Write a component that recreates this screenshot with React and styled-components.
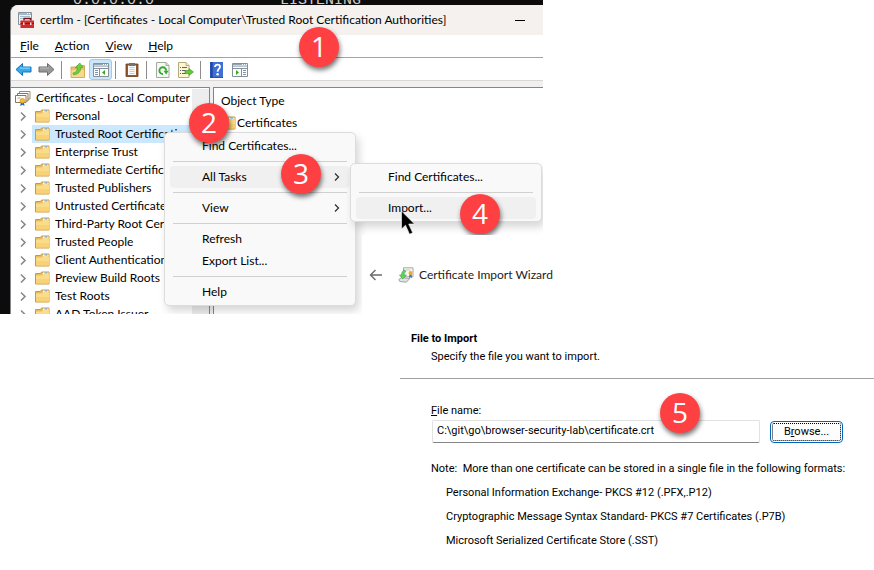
import React from "react";
import styled, { createGlobalStyle } from "styled-components";

const ui = 'Lato, "Open Sans", sans-serif';
const dialogFont = 'Roboto, "Noto Sans", sans-serif';

const Global = createGlobalStyle`
  * { box-sizing: border-box; }
  body { margin: 0; background: #fff; color: #000; font: 12px/18px ${ui}; }
  button, input { font: inherit; color: inherit; }
  ul { list-style: none; margin: 0; padding: 0; }
  h1, h2, p { margin: 0; font-size: inherit; }
  svg { display: block; flex: none; }
`;

const Page = styled.main`
  display: grid;
  grid-template-columns: 362px 181px 1fr;
  grid-template-rows: 235px 79px auto;
  min-height: 100vh;
  overflow: hidden;
`;

const Capture = styled.section`
  grid-area: 1 / 1 / 3 / 3;
  position: relative;
  overflow: hidden;
  background: #0c0c0c;
  padding-left: 10px;
  display: flex;
  flex-direction: column;
`;

const Terminal = styled.div`
  display: flex;
  align-items: flex-end;
  gap: 126px;
  height: 5px;
  padding-left: 63px;
  color: #ccc;
  font: 15px/9px "Liberation Mono", monospace;
  white-space: nowrap;
`;

const ConsoleWindow = styled.div`
  flex: 1;
  min-height: 0;
  display: flex;
  flex-direction: column;
  background: #f0f0f0;
  border-left: 1px solid #85878c;
  border-top-left-radius: 8px;
  overflow: hidden;
`;

const TitleBar = styled.header`
  display: flex;
  align-items: center;
  gap: 6px;
  height: 30px;
  padding: 0 18px 0 7px;
  background: #f4f1ef;
  white-space: nowrap;
`;

const WindowTitle = styled.h1`
  flex: 1;
  font-weight: 400;
`;

const PlainButton = styled.button`
  display: flex;
  align-items: center;
  justify-content: center;
  padding: 0;
  border: 0;
  background: none;
`;

const MenuBar = styled.nav`
  display: flex;
  gap: 16px;
  height: 23px;
  padding-left: 9px;
  background: #fff;
  border-bottom: 1px solid #a3a3a3;
`;

const ToolBar = styled.div`
  display: flex;
  align-items: center;
  height: 23px;
  padding: 1px 0 0 1px;
  background: #fff;
  border-bottom: 1px solid #d9d6d3;
`;

const ToolButton = styled(PlainButton)`
  width: 23px;
  height: 21px;
  border: 1px solid ${(p) => (p.$on ? "#99ccf5" : "transparent")};
  border-radius: 3px;
  background: ${(p) => (p.$on ? "#cce6fb" : "none")};
`;

const ToolRule = styled.span`
  width: 1px;
  height: 18px;
  margin: 0 4px 0 3px;
  background: #8d8d8d;
`;

const Panes = styled.div`
  flex: 1;
  min-height: 0;
  display: grid;
  grid-template-columns: 199px 1fr;
  gap: 3px;
  padding-top: 6px;
`;

const Pane = styled.div`
  background: #fff;
  border: 1px solid #82858f;
  border-bottom: 0;
  overflow: hidden;
`;

const TreePane = styled(Pane)`
  display: grid;
  grid-template-columns: 1fr 17px;
  border-left: 0;
  padding-top: 1px;
`;

const Tree = styled.ul`
  min-width: 0;
  overflow: hidden;
  white-space: nowrap;
`;

const ScrollTrack = styled.div`
  background: #ededed;
`;

const RootRow = styled.li`
  display: flex;
  align-items: center;
  gap: 5px;
  height: 18px;
  padding-left: 4px;
`;

const TreeRow = styled.li`
  display: flex;
  align-items: center;
  height: 18px;
  padding-left: 8px;
`;

const TreeLabel = styled.span`
  flex: 1;
  display: flex;
  align-items: center;
  gap: 5px;
  margin-left: 5px;
  padding-left: 3px;
  background: ${(p) => (p.$selected ? "#cce8ff" : "none")};
`;

const ListPane = styled(Pane)`
  border-right: 0;
  padding: 2px 0 0 7px;
`;

const ListHead = styled.div`
  height: 22px;
  line-height: 22px;
`;

const ListRow = styled.div`
  display: flex;
  align-items: center;
  gap: 1px;
  height: 22px;
`;

const Menu = styled.div`
  position: absolute;
  left: ${(p) => p.$x}px;
  top: ${(p) => p.$y}px;
  width: 192px;
  padding: 2px 5px;
  background: #f9f9f9;
  border: 1px solid #dcdcdc;
  border-radius: 5px;
  box-shadow: 3px 5px 9px rgba(0, 0, 0, 0.16);
`;

const MenuItem = styled(PlainButton)`
  width: 100%;
  height: 22px;
  justify-content: space-between;
  padding: 0 9px 0 32px;
  border-radius: 4px;
  background: ${(p) => (p.$hover ? "#f0f0f0" : "none")};
`;

const MenuRule = styled.hr`
  height: 1px;
  margin: 4px 3px;
  border: 0;
  background: #d0d0d0;
`;

const Badge = styled.span`
  position: absolute;
  left: ${(p) => p.$x}px;
  top: ${(p) => p.$y}px;
  width: 40px;
  height: 40px;
  border-radius: 50%;
  background: #ff4043;
  box-shadow: 1px 3px 5px rgba(0, 0, 0, 0.55);
  color: #fff;
  font: 28px/39px "Open Sans", sans-serif;
  text-align: center;
`;

const Pointer = styled.svg`
  position: absolute;
  left: 401px;
  top: 210px;
`;

const Wizard = styled.section`
  grid-area: 2 / 2 / 4 / 4;
  position: relative;
  background: #fff;
  font: 11px/18px ${dialogFont};
`;

const WizardBar = styled.header`
  display: flex;
  align-items: center;
  height: 24px;
  margin-top: 28px;
  padding-left: 7px;
  font-family: ${ui};
  font-size: 12px;
  color: #222;
`;

const WizardName = styled.h1`
  margin-left: 5px;
  font-weight: 400;
`;

const BackButton = styled(PlainButton)`
  margin-right: 15px;
`;

const WizardHead = styled.div`
  margin: 43px 0 0 38px;
  padding: 0 0 12px 11px;
  border-bottom: 1px solid #a0a0a0;

  h2 { font-weight: 700; }
  p { padding-left: 20px; }
`;

const WizardBody = styled.div`
  padding: 23px 31px 16px 69px;
`;

const FileRow = styled.div`
  display: flex;
  align-items: center;
  gap: 10px;
  margin-left: 1px;
`;

const FileInput = styled.input`
  flex: 1;
  min-width: 0;
  height: 23px;
  padding: 0 4px 3px;
  border: 1px solid #e2e2e2;
  border-bottom-color: #868686;
  border-radius: 2px;
  outline: 0;
`;

const Browse = styled.button`
  width: 73px;
  height: 22px;
  padding: 0;
  border: 1px solid #0067c0;
  border-radius: 4px;
  background: #fdfdfd;
  outline: 1px dotted #000;
  outline-offset: -3px;
  line-height: 18px;
`;

const Formats = styled.ul`
  display: grid;
  gap: 6px;
  margin-top: 6px;
  padding-left: 15px;
`;

const Note = styled.p`
  margin: 17px -20px 0 0;
  white-space: pre-wrap;
`;

const Folder = () => (
  <svg width="15" height="14" viewBox="0 0 15 14">
    <path d="M.5 2.500h5l1-1.500h7.500v12H.5z" fill="#e9bd59" stroke="#c69a43" />
    <path d="M8 1.500h5.500v2H8z" fill="#fff" />
    <path d="M9.500 1.500h3v1h-3z" fill="#4a9be0" />
    <path d="M1 4.500h5.500l1-1H14v9H1z" fill="#fbdc8b" />
    <path d="M1 8h13v4.500H1z" fill="#f6cd6c" opacity=".7" />
  </svg>
);

const Chevron = () => (
  <svg width="8" height="10" viewBox="0 0 8 10">
    <path d="M2 1.500l4 4-4 4" fill="none" stroke="#8a8a8a" strokeWidth="1.600" />
  </svg>
);

const MenuArrow = () => (
  <svg width="8" height="10" viewBox="0 0 8 10">
    <path d="M2 1.500l3.500 3.500L2 8.500" fill="none" stroke="#333" strokeWidth="1.300" />
  </svg>
);

const AppIcon = () => (
  <svg width="16" height="16" viewBox="0 0 16 16">
    <path d="M.5.5h13v12H.5z" fill="#eef2f6" stroke="#8395a5" />
    <path d="M1 1h12v2H1z" fill="#a9b9c7" />
    <path d="M9 1.500h1M11 1.500h1" stroke="#fff" />
    <path d="M2 4.500h10M2 6.500h3M2 9.500h1" stroke="#a9b9c7" />
    <path d="M6 8.500V6.500h6.500v2" fill="none" stroke="#65191b" strokeWidth="1.400" />
    <path d="M2.500 8.500H16V16H2.500z" fill="#d02c2c" />
    <path d="M2.500 11.500H16" stroke="#8d1517" />
    <path d="M5 10.500h1.500v2.500H5zM12 10.500h1.500v2.500H12z" fill="#f3dede" />
  </svg>
);

const CertStack = () => (
  <svg width="16" height="16" viewBox="0 0 16 16">
    <path d="M4.500 1.500h10.500v7.500H4.500z" fill="#fff" stroke="#9a8a68" />
    <path d="M2.500 3.500h10.500v7.500H2.500z" fill="#fff" stroke="#8a7650" />
    <path d="M.5 5.500h10.500v7H.5z" fill="#fffdf5" stroke="#8a7650" />
    <path d="M2.500 8h3" stroke="#aaa" />
    <path d="M6 11.500L5.200 16l2.300-1.300L9.500 16 8.800 11.500z" fill="#1769c4" />
    <circle cx="7.400" cy="10.800" r="2.400" fill="#f5bb35" stroke="#cf8d16" strokeWidth=".6" />
  </svg>
);

const BlueArrow = ({ forward }) => (
  <svg width="17" height="15" viewBox="0 0 17 15">
    <path
      d={forward ? "M16 7.500L9.500 1.500v3.500H1v5h8.500v3.500z" : "M1 7.500L7.500 1.500v3.500H16v5H7.500v3.500z"}
      fill={forward ? "#989898" : "#35a9ee"}
      stroke={forward ? "#6d6d6d" : "#1676b4"}
      strokeLinejoin="round"
    />
    <path d={forward ? "M2 6.200h9" : "M5 6.200h10"} stroke={forward ? "#b5b5b5" : "#80d0fa"} strokeWidth="1.200" />
  </svg>
);

const UpFolder = () => (
  <svg width="16" height="16" viewBox="0 0 16 16">
    <path d="M1 5h5l1-1.500h7.500v12H1z" fill="#ecc267" stroke="#cca045" strokeWidth=".8" />
    <path d="M1.500 8h12.500v7H1.500z" fill="#f8d98b" />
    <path d="M3 11c3.200-.4 4.300-2.300 4.500-5H5.300L9.800 1 13 5.500h-2.200c0 4.300-2.600 7-7.300 7.200z" fill="#6bd03f" stroke="#3d9d28" strokeWidth=".6" />
  </svg>
);

const PaneIcon = ({ mirror }) => (
  <svg width="16" height="14" viewBox="0 0 16 14">
    <path d="M.5.5h15v13H.5z" fill="#fff" stroke="#85909a" />
    <path d="M1 1h14v1.500H1z" fill="#98a6b3" />
    <path d="M10 1.500h1M12 1.500h1M14 1.500h1" stroke="#fff" />
    <path d="M1 3.500h14" stroke="#b7c3ce" />
    <path d="M1 5.500h14" stroke="#85909a" />
    <path d={mirror ? "M9.500 5.500v8" : "M6.500 5.500v8"} stroke="#85909a" />
    <path d={mirror ? "M11 7.500h3M11 9.500h3M11 11.500h3" : "M2 7.500h3M2 9.500h3M2 11.500h3"} stroke="#7b94ab" />
    <path d={mirror ? "M4 7v5l3-2.500z" : "M12 7v5L9 9.500z"} fill="#35a91c" />
  </svg>
);

const Clipboard = () => (
  <svg width="14" height="15" viewBox="0 0 14 15">
    <path d="M1 2h12v12.500H1z" fill="#97592b" stroke="#6f3d18" strokeWidth=".8" />
    <path d="M3 3.500h8V13H3z" fill="#fafafa" />
    <path d="M4 1h6v3H4z" fill="#737373" />
    <path d="M4.500 5.500h5M4.500 7.500h5M4.500 9.500h5M4.500 11.500h5" stroke="#b8c0c8" strokeWidth=".8" />
  </svg>
);

const Refresh = () => (
  <svg width="14" height="16" viewBox="0 0 14 16">
    <path d="M.5.5h9.500l3 3v12H.5z" fill="#f7f8f6" stroke="#a3a8a1" />
    <path d="M10 .5v3h3" fill="#ddd" stroke="#a3a8a1" />
    <path d="M7 12A3.400 3.400 0 1 1 10.200 8.800" fill="none" stroke="#34ad2c" strokeWidth="1.900" />
    <path d="M7.500 8.800h5L10.200 12.500z" fill="#34ad2c" />
  </svg>
);

const ExportIcon = () => (
  <svg width="16" height="16" viewBox="0 0 16 16">
    <path d="M.5.5h7.500l3 3v12H.5z" fill="#fff6cf" stroke="#b8a97a" />
    <path d="M8 .5v3h3" fill="#eee" stroke="#b8a97a" />
    <path d="M2 5.500h1M4 5.500h5M2 8.500h1M4 8.500h4M2 11.500h1M4 11.500h4" stroke="#56657b" />
    <path d="M7 8.500h4V6.500l4.500 3.500-4.500 3.500v-2H7z" fill="#62ca38" stroke="#3b9b23" strokeWidth=".6" />
  </svg>
);

const HelpIcon = () => (
  <svg width="13" height="16" viewBox="0 0 13 16">
    <path d="M0 0h13v16H0z" fill="#2951b8" />
    <path d="M2 0h11v15H2z" fill="#3f6fd4" />
    <path d="M2 0v16" stroke="#1b3b91" />
    <path d="M5 5c0-3.300 5-3 5-.3 0 2.300-2.400 2.300-2.400 5" fill="none" stroke="#fff" strokeWidth="1.800" />
    <circle cx="7.600" cy="12.300" r="1.200" fill="#fff" />
  </svg>
);

const ImportIcon = () => (
  <svg width="16" height="16" viewBox="0 0 16 16">
    <path d="M5.500.8h9.500v9H5.500z" fill="#f8f6ee" stroke="#aaa79c" />
    <path d="M7.500 3h5" stroke="#c5c9d0" />
    <path d="M11.500 7l-.5 4 1.500-.8 1.600.8-.6-4z" fill="#3479c7" />
    <circle cx="12.500" cy="6" r="1.900" fill="#f0a827" />
    <path d="M.8 12.500l3-2 8 1-3.500 3.700-6.500-.7z" fill="#dfe1e3" stroke="#8e9297" strokeWidth=".8" />
    <path d="M7 3C4.500 3.500 3.500 5.500 3.600 8H1.500l3.200 4L8.500 8H6.200c-.2-1.500.2-2.600 1.500-3.200z" fill="#5fd35d" stroke="#36a43b" strokeWidth=".6" />
  </svg>
);

const stores = [
  "Personal", "Trusted Root Certification Authorities", "Enterprise Trust",
  "Intermediate Certification Authorities", "Trusted Publishers", "Untrusted Certificates",
  "Third-Party Root Certification Authorities", "Trusted People", "Client Authentication Issuers",
  "Preview Build Roots", "Test Roots", "AAD Token Issuer",
];

const menus = ["File", "Action", "View", "Help"];

export default function App() {
  return (
    <>
      <Global />
      <Page>
        <Capture>
          <Terminal>
            <span>0.0.0.0:0</span>
            <span>LISTENING</span>
          </Terminal>
          <ConsoleWindow>
            <TitleBar>
              <AppIcon />
              <WindowTitle>certlm - [Certificates - Local Computer\Trusted Root Certification Authorities]</WindowTitle>
              <PlainButton aria-label="Minimize">
                <svg width="10" height="10" viewBox="0 0 10 10"><path d="M0 5.500h10" stroke="#000" /></svg>
              </PlainButton>
            </TitleBar>
            <MenuBar>
              {menus.map((m) => (
                <PlainButton key={m}><span><u>{m[0]}</u>{m.slice(1)}</span></PlainButton>
              ))}
            </MenuBar>
            <ToolBar>
              <ToolButton aria-label="Back"><BlueArrow /></ToolButton>
              <ToolButton aria-label="Forward"><BlueArrow forward /></ToolButton>
              <ToolRule />
              <ToolButton aria-label="Up one level"><UpFolder /></ToolButton>
              <ToolButton aria-label="Show console tree" $on><PaneIcon /></ToolButton>
              <ToolRule />
              <ToolButton aria-label="Paste"><Clipboard /></ToolButton>
              <ToolRule />
              <ToolButton aria-label="Refresh"><Refresh /></ToolButton>
              <ToolButton aria-label="Export list"><ExportIcon /></ToolButton>
              <ToolRule />
              <ToolButton aria-label="Help"><HelpIcon /></ToolButton>
              <ToolButton aria-label="Show action pane"><PaneIcon mirror /></ToolButton>
            </ToolBar>
            <Panes>
              <TreePane>
                <Tree>
                  <RootRow><CertStack />Certificates - Local Computer</RootRow>
                  {stores.map((s, i) => (
                    <TreeRow key={s}>
                      <Chevron />
                      <TreeLabel $selected={i === 1}><Folder />{s}</TreeLabel>
                    </TreeRow>
                  ))}
                </Tree>
                <ScrollTrack />
              </TreePane>
              <ListPane>
                <ListHead>Object Type</ListHead>
                <ListRow><Folder />Certificates</ListRow>
              </ListPane>
            </Panes>
          </ConsoleWindow>

          <Menu $x={164} $y={132}>
            <MenuItem>Find Certificates...</MenuItem>
            <MenuRule />
            <MenuItem $hover>All Tasks<MenuArrow /></MenuItem>
            <MenuRule />
            <MenuItem>View<MenuArrow /></MenuItem>
            <MenuRule />
            <MenuItem>Refresh</MenuItem>
            <MenuItem>Export List...</MenuItem>
            <MenuRule />
            <MenuItem>Help</MenuItem>
          </Menu>
          <Menu $x={350} $y={163}>
            <MenuItem>Find Certificates...</MenuItem>
            <MenuRule />
            <MenuItem $hover>Import...</MenuItem>
          </Menu>

          <Badge $x={299} $y={27}>1</Badge>
          <Badge $x={189} $y={103}>2</Badge>
          <Badge $x={281} $y={154}>3</Badge>
          <Badge $x={460} $y={194}>4</Badge>
          <Pointer width="14" height="25" viewBox="0 0 14 25">
            <path d="M.5 1v18l4-3.800 4 9 3.200-1.400-4-8.800H13.500z" fill="#000" stroke="#fff" strokeWidth=".6" />
          </Pointer>
        </Capture>

        <Wizard>
          <WizardBar>
            <BackButton aria-label="Back">
              <svg width="14" height="12" viewBox="0 0 14 12">
                <path d="M13 6H1.500M6.500 1l-5 5 5 5" fill="none" stroke="#6b6b6b" strokeWidth="1.400" />
              </svg>
            </BackButton>
            <ImportIcon />
            <WizardName>Certificate Import Wizard</WizardName>
          </WizardBar>
          <WizardHead>
            <h2>File to Import</h2>
            <p>Specify the file you want to import.</p>
          </WizardHead>
          <WizardBody>
            <label htmlFor="file-name"><u>F</u>ile name:</label>
            <FileRow>
              <FileInput id="file-name" defaultValue="C:\git\go\browser-security-lab\certificate.crt" />
              <Browse>B<u>r</u>owse...</Browse>
            </FileRow>
            <Note>{"Note:  More than one certificate can be stored in a single file in the following formats:"}</Note>
            <Formats>
              <li>Personal Information Exchange- PKCS #12 (.PFX,.P12)</li>
              <li>Cryptographic Message Syntax Standard- PKCS #7 Certificates (.P7B)</li>
              <li>Microsoft Serialized Certificate Store (.SST)</li>
            </Formats>
          </WizardBody>
          <Badge $x={298} $y={158}>5</Badge>
        </Wizard>
      </Page>
    </>
  );
}
